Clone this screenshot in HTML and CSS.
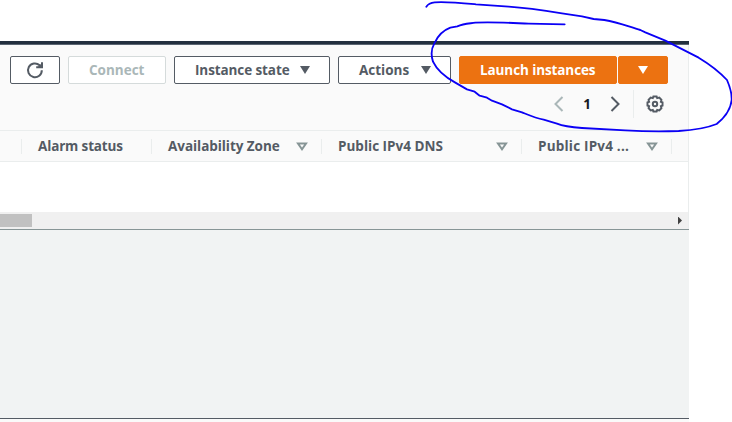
FILE: index.html
```html
<!DOCTYPE html>
<html lang="en">
<head>
<meta charset="utf-8">
<title>Instances</title>
<link rel="stylesheet" href="styles.css">
</head>
<body>
<main class="panel">
  <div class="topbar"></div>
  <header class="toolbar">
    <div class="actions">
      <button class="btn refresh" aria-label="Refresh"><svg width="18" height="18" viewBox="0 0 18 18"><path d="M15.8 9.2A6.9 6.9 0 1 1 13.6 4.3L15.6 6M16 1.2V6.3H10.2"/><path class="solid" d="M16 2V6.3H11.5Z"/></svg></button>
      <button class="btn connect" disabled><span>Connect</span></button>
      <button class="btn state"><span>Instance state</span><i class="caret"></i></button>
      <button class="btn act"><span>Actions</span><i class="caret"></i></button>
      <div class="split">
        <button class="btn primary launch"><span>Launch instances</span></button>
        <button class="btn primary more" aria-label="More"><i class="caret"></i></button>
      </div>
    </div>
    <div class="pager">
      <svg class="prev" width="10" height="16" viewBox="0 0 10 16"><path d="M8.5 1L1.5 8L8.5 15"/></svg>
      <span class="page">1</span>
      <svg class="next" width="10" height="16" viewBox="0 0 10 16"><path d="M1.5 1L8.5 8L1.5 15"/></svg>
      <span class="rule"></span>
      <svg class="gear" width="18" height="18" viewBox="0 0 18 18"><path d="M7.4 1.5H10.6L11.2 3.1L13.3 2.6L15.4 4.7L14.9 6.8L16.5 7.4V10.6L14.9 11.2L15.4 13.3L13.3 15.4L11.2 14.9L10.6 16.5H7.4L6.8 14.9L4.7 15.4L2.6 13.3L3.1 11.2L1.5 10.6V7.4L3.1 6.8L2.6 4.7L4.7 2.6L6.8 3.1Z"/><circle cx="9" cy="9" r="2.2"/></svg>
    </div>
  </header>
  <div class="columns">
    <div class="col c0"></div>
    <div class="col c1"><span>Alarm status</span></div>
    <div class="col c2"><span>Availability Zone</span><svg width="12" height="9" viewBox="0 0 12 9"><path d="M2 1.5H10L6 7.2Z"/></svg></div>
    <div class="col c3"><span>Public IPv4 DNS</span><svg width="12" height="9" viewBox="0 0 12 9"><path d="M2 1.5H10L6 7.2Z"/></svg></div>
    <div class="col c4"><span>Public IPv4 ...</span><svg width="12" height="9" viewBox="0 0 12 9"><path d="M2 1.5H10L6 7.2Z"/></svg></div>
  </div>
  <div class="rows"></div>
  <div class="scrollbar"><div class="thumb"></div><i class="arrow"></i></div>
  <div class="details"></div>
  <div class="footer"></div>
</main>
<svg class="ink" width="732" height="422" viewBox="0 0 732 422"><g transform="translate(412 0) scale(.33333)"><path d="M43 20C48 12 56 8 68 7C100 4 150 9 192 13L290 20C350 24 400 32 450 40L510 49L545 57L577 60C620 67 650 80 685 90L700 97L760 122L860 173C890 191 922 215 945 240C956 265 960 280 959 300C956 330 938 353 914 372C880 386 850 390 800 393C740 395 690 394 640 391L510 384C470 381 450 377 435 371L395 359C370 354 350 345 330 337L300 328L270 313L240 302L225 293L203 287L188 275L165 268L130 248C95 229 72 204 63 185C56 164 58 146 67 130C79 104 96 90 115 83L136 79C155 71 170 71 190 68C240 65 300 69 350 71L458 73"/></g></svg>
</body>
</html>
```
FILE: styles.css
```css
* { box-sizing: border-box; }
body {
  margin: 0;
  width: 732px;
  height: 422px;
  overflow: hidden;
  background: #fff;
  font: 700 13.5px/18px "Open Sans", "Noto Sans", sans-serif;
  color: #545b64;
}
.panel { width: 689px; padding-top: 41px; }
.topbar { height: 4px; background: #232f3e; border-bottom: 1px solid #5b6572; }
.toolbar {
  height: 86px;
  padding: 11px 0 0 10px;
  background: #fafafa;
  border-right: 1px solid #eaeded;
  border-bottom: 1px solid #eaeded;
}
.actions { display: flex; gap: 8px; }
.btn {
  display: flex;
  align-items: center;
  height: 28px;
  margin: 0;
  padding: 0 0 0 20px;
  border: 1px solid #545b64;
  border-radius: 2px;
  background: #fff;
  color: #545b64;
  font: inherit;
  white-space: nowrap;
}
.refresh { width: 50px; padding: 0; justify-content: center; }
svg { display: block; fill: none; stroke: #545b64; stroke-width: 2; flex: none; }
.solid { fill: #545b64; stroke: none; }
.connect { width: 98px; color: #aab7b8; border-color: #d5dbdb; }
.state { width: 156px; letter-spacing: -.1px; }
.act { width: 113px; }
.caret {
  width: 10px;
  height: 8px;
  background: currentColor;
  clip-path: polygon(0 0, 100% 0, 50% 100%);
}
.state span { width: 105px; text-align: left; }
.act span { width: 62px; text-align: left; }
.split { display: flex; gap: 1px; }
.primary { background: #ec7211; border-color: #ec7211; color: #fff; }
.launch { width: 158px; letter-spacing: -.1px; }
.more { width: 50px; padding: 0; justify-content: center; }
.pager { display: flex; align-items: center; height: 28px; margin-top: 6px; padding-left: 544px; }
.prev { stroke: #aab7b8; }
.page { width: 46px; text-align: center; color: #16191f; }
.rule { width: 1px; height: 28px; margin: 0 12px 0 13px; background: #eaeded; }
.columns {
  display: flex;
  align-items: center;
  height: 31px;
  background: #fafafa;
  border-right: 1px solid #eaeded;
  border-bottom: 1px solid #eaeded;
}
.col { display: flex; align-items: center; justify-content: space-between; height: 15px; padding: 0 13px 0 16px; border-right: 1px solid #eaeded; white-space: nowrap; }
.c0 { width: 22px; padding: 0; }
.c1 { width: 130px; letter-spacing: -.15px; }
.c2 { width: 170px; letter-spacing: -.05px; }
.c3 { width: 200px; }
.c4 { width: 150px; letter-spacing: .2px; }
.col svg { stroke: #879596; }
.rows { height: 50px; border-right: 1px solid #eaeded; }
.scrollbar { display: flex; align-items: center; justify-content: space-between; height: 17px; padding-right: 6px; background: #f0f0f0; border-right: 1px solid #eaeded; }
.thumb { width: 32px; height: 13px; background: #c1c1c1; }
.arrow { width: 4px; height: 8px; background: #404040; clip-path: polygon(0 0, 100% 50%, 0 100%); }
.details { height: 189px; background: #f1f3f3; border-top: 1px solid #879596; }
.footer { height: 4px; background: #fafafa; border-top: 1px solid #545b64; }
.ink { position: absolute; left: 0; top: 0; pointer-events: none; }
.ink path { stroke: #0b00f5; stroke-width: 5.5; stroke-linecap: round; stroke-linejoin: round; }
```
